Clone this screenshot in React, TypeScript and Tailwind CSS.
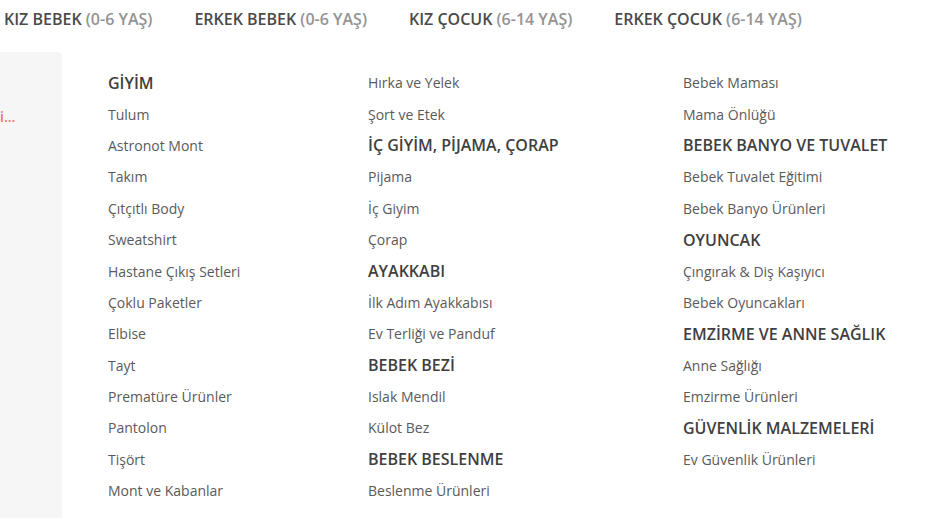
type Entry = { label: string; head?: boolean };

const h = (label: string): Entry => ({ label, head: true });
const i = (label: string): Entry => ({ label });

const columns: Entry[][] = [
  [
    h('GİYİM'),
    i('Tulum'),
    i('Astronot Mont'),
    i('Takım'),
    i('Çıtçıtlı Body'),
    i('Sweatshirt'),
    i('Hastane Çıkış Setleri'),
    i('Çoklu Paketler'),
    i('Elbise'),
    i('Tayt'),
    i('Prematüre Ürünler'),
    i('Pantolon'),
    i('Tişört'),
    i('Mont ve Kabanlar'),
  ],
  [
    i('Hırka ve Yelek'),
    i('Şort ve Etek'),
    h('İÇ GİYİM, PİJAMA, ÇORAP'),
    i('Pijama'),
    i('İç Giyim'),
    i('Çorap'),
    h('AYAKKABI'),
    i('İlk Adım Ayakkabısı'),
    i('Ev Terliği ve Panduf'),
    h('BEBEK BEZİ'),
    i('Islak Mendil'),
    i('Külot Bez'),
    h('BEBEK BESLENME'),
    i('Beslenme Ürünleri'),
  ],
  [
    i('Bebek Maması'),
    i('Mama Önlüğü'),
    h('BEBEK BANYO VE TUVALET'),
    i('Bebek Tuvalet Eğitimi'),
    i('Bebek Banyo Ürünleri'),
    h('OYUNCAK'),
    i('Çıngırak & Diş Kaşıyıcı'),
    i('Bebek Oyuncakları'),
    h('EMZİRME VE ANNE SAĞLIK'),
    i('Anne Sağlığı'),
    i('Emzirme Ürünleri'),
    h('GÜVENLİK MALZEMELERİ'),
    i('Ev Güvenlik Ürünleri'),
  ],
];

const tabs = [
  { name: 'KIZ BEBEK', age: '(0-6 YAŞ)' },
  { name: 'ERKEK BEBEK', age: '(0-6 YAŞ)' },
  { name: 'KIZ ÇOCUK', age: '(6-14 YAŞ)' },
  { name: 'ERKEK ÇOCUK', age: '(6-14 YAŞ)' },
];

export default function App() {
  return (
    <div className="w-[930px] h-[518px] overflow-hidden bg-white font-['Open_Sans',sans-serif]">
      <nav className="h-[38px] flex items-center gap-[42px] pl-[4px] text-[16px] font-semibold">
        {tabs.map((tab) => (
          <a key={tab.name + tab.age} className="text-[#4a4a4a] whitespace-nowrap">
            {tab.name} <span className="text-[#939393]">{tab.age}</span>
          </a>
        ))}
      </nav>

      <div className="flex mt-[14px]">
        <aside className="w-[62px] h-[466px] bg-[#f6f6f6] rounded-tr-[5px] pt-[52px] overflow-hidden">
          <span className="text-[14px] font-semibold text-[#f56d70] leading-[22px]">i...</span>
        </aside>

        <div className="flex pl-[46px] pt-[15px]">
          {columns.map((col, ci) => (
            <ul key={ci} className={ci === 0 ? 'w-[260px]' : ci === 1 ? 'w-[315px]' : 'w-[240px]'}>
              {col.map((e) => (
                <li
                  key={e.label}
                  className={`h-[31.4px] flex items-center whitespace-nowrap ${
                    e.head ? 'text-[16px] font-semibold text-[#3f3f3f]' : 'text-[14px] text-[#5a5a5a]'
                  }`}
                >
                  {e.label}
                </li>
              ))}
            </ul>
          ))}
        </div>
      </div>
    </div>
  );
}
